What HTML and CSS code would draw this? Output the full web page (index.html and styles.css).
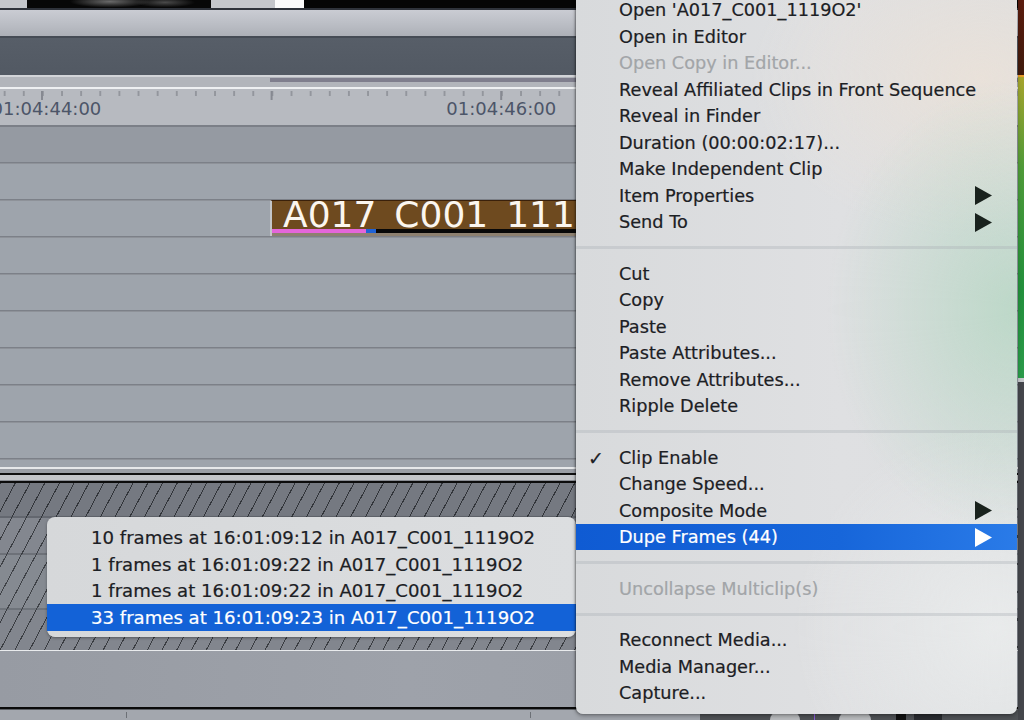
FILE: index.html
```html
<!DOCTYPE html>
<html>
<head>
<meta charset="utf-8">
<link rel="stylesheet" href="styles.css">
</head>
<body>
<div class="screen">
  <div class="timeline">
    <div class="thumbs">
      <span class="tg w27"></span><span class="tb img w184"></span><span class="tg w64"></span><span class="tw w29"></span><span class="tb fill"></span>
    </div>
    <div class="r-dark"></div>
    <div class="toolbar"></div>
    <div class="r-mid"></div>
    <div class="slate"></div>
    <div class="r-light"></div>
    <div class="scroll"><div class="scroll-bar"></div></div>
    <div class="r-white"></div>
    <div class="ruler">
      <span class="tc first">01:04:44:00</span>
      <span class="tc second">01:04:46:00</span>
    </div>
    <div class="r-ruler"></div>
    <div class="track t1"></div>
    <div class="track"></div>
    <div class="track clip-track">
      <div class="clip">
        <div class="clip-name">A017_C001_111</div>
        <div class="clip-strip"><span class="s-mag"></span><span class="s-blue"></span><span class="s-black"></span></div>
        <div class="clip-foot"></div>
      </div>
    </div>
    <div class="track"></div>
    <div class="track"></div>
    <div class="track"></div>
    <div class="track"></div>
    <div class="track"></div>
    <div class="track"></div>
    <div class="track-part"></div>
    <div class="div-a"></div>
    <div class="div-b"></div>
    <div class="div-c"></div>
    <div class="div-d"></div>
    <div class="div-e"></div>
    <div class="div-f"></div>
    <div class="hatch">
      <div class="h-row h1"></div>
      <div class="h-row h2"></div>
      <div class="h-row h3"></div>
      <div class="h-row h4"></div>
    </div>
    <div class="div-g"></div>
    <div class="band"></div>
    <div class="div-h"></div>
    <div class="bottom">
      <div class="bottom-left"></div>
      <div class="bottom-right">
        <span class="knob"></span><span class="purple"></span><span class="knob k2"></span><span class="cursor"></span><span class="dark-btn"></span>
      </div>
    </div>
  </div>
  <div class="meter">
    <div class="m-red"></div>
    <div class="m-orange"></div>
    <div class="m-green"></div>
    <div class="m-light"></div>
    <div class="m-dark"></div>
  </div>

  <div class="submenu">
    <div class="si">10 frames at 16:01:09:12 in A017_C001_1119O2</div>
    <div class="si">1 frames at 16:01:09:22 in A017_C001_1119O2</div>
    <div class="si">1 frames at 16:01:09:22 in A017_C001_1119O2</div>
    <div class="si sel">33 frames at 16:01:09:23 in A017_C001_1119O2</div>
  </div>

  <div class="menu">
    <div class="mi"><span class="ck"></span><span class="lb">Open 'A017_C001_1119O2'</span></div>
    <div class="mi"><span class="ck"></span><span class="lb">Open in Editor</span></div>
    <div class="mi dis"><span class="ck"></span><span class="lb">Open Copy in Editor...</span></div>
    <div class="mi"><span class="ck"></span><span class="lb">Reveal Affiliated Clips in Front Sequence</span></div>
    <div class="mi"><span class="ck"></span><span class="lb">Reveal in Finder</span></div>
    <div class="mi"><span class="ck"></span><span class="lb">Duration (00:00:02:17)...</span></div>
    <div class="mi"><span class="ck"></span><span class="lb">Make Independent Clip</span></div>
    <div class="mi"><span class="ck"></span><span class="lb">Item Properties</span><svg class="ar" viewBox="0 0 17 19"><polygon points="0,0 17,9.5 0,19"/></svg></div>
    <div class="mi"><span class="ck"></span><span class="lb">Send To</span><svg class="ar" viewBox="0 0 17 19"><polygon points="0,0 17,9.5 0,19"/></svg></div>
    <div class="sep"></div>
    <div class="mi"><span class="ck"></span><span class="lb">Cut</span></div>
    <div class="mi"><span class="ck"></span><span class="lb">Copy</span></div>
    <div class="mi"><span class="ck"></span><span class="lb">Paste</span></div>
    <div class="mi"><span class="ck"></span><span class="lb">Paste Attributes...</span></div>
    <div class="mi"><span class="ck"></span><span class="lb">Remove Attributes...</span></div>
    <div class="mi"><span class="ck"></span><span class="lb">Ripple Delete</span></div>
    <div class="sep"></div>
    <div class="mi"><span class="ck">✓</span><span class="lb">Clip Enable</span></div>
    <div class="mi"><span class="ck"></span><span class="lb">Change Speed...</span></div>
    <div class="mi"><span class="ck"></span><span class="lb">Composite Mode</span><svg class="ar" viewBox="0 0 17 19"><polygon points="0,0 17,9.5 0,19"/></svg></div>
    <div class="mi sel"><span class="ck"></span><span class="lb">Dupe Frames (44)</span><svg class="ar" viewBox="0 0 17 19"><polygon points="0,0 17,9.5 0,19"/></svg></div>
    <div class="sep"></div>
    <div class="mi dis"><span class="ck"></span><span class="lb">Uncollapse Multiclip(s)</span></div>
    <div class="sep"></div>
    <div class="mi"><span class="ck"></span><span class="lb">Reconnect Media...</span></div>
    <div class="mi"><span class="ck"></span><span class="lb">Media Manager...</span></div>
    <div class="mi"><span class="ck"></span><span class="lb">Capture...</span></div>
  </div>
</div>
</body>
</html>
```

FILE: styles.css
```css
* { box-sizing: border-box; }
html, body { margin: 0; padding: 0; }
body { width: 1024px; height: 720px; overflow: hidden; background: #9a9ea6; font-family: "DejaVu Sans", "Liberation Sans", sans-serif; }

.screen { position: relative; width: 1024px; height: 720px; display: flex; overflow: hidden; }
.timeline { flex: 1; display: flex; flex-direction: column; min-width: 0; }

/* top thumbnail strip */
.thumbs { height: 8px; display: flex; }
.thumbs span { display: block; height: 100%; }
.tg { background: #c4c6cb; }
.tb { background: #050505; }
.tb.img { background: radial-gradient(ellipse 40px 6px at 45% 20%, #6a6a6a, transparent), radial-gradient(ellipse 30px 5px at 75% 30%, #4a4a4a, transparent), #070707; }
.tw { background: #fbfbfb; }
.w27 { width: 27px; } .w184 { width: 184px; } .w64 { width: 64px; } .w29 { width: 29px; }
.fill { flex: 1; }

.r-dark { height: 2px; background: #2e323a; }
.toolbar { height: 26px; background: linear-gradient(#caccd3, #b9bcc3 60%, #adb0b7); }
.r-mid { height: 2px; background: #464c55; }
.slate { height: 37px; background: linear-gradient(#575e68, #525963); }
.r-light { height: 2px; background: #d2d4d8; }
.scroll { height: 10px; background: #b2b5bb; padding: 1px 0 0 270px; }
.scroll-bar { height: 4px; background: #7f7e8d; }
.r-white { height: 2px; background: #eef0f2; }

.ruler {
  height: 36px; display: flex; padding-top: 10px;
  background:
    linear-gradient(90deg, #868991 0 2px, transparent 2px) 41px 2px / 229.6px 9px repeat-x,
    linear-gradient(90deg, #93969d 0 2px, transparent 2px) 3.7px 2px / 19.13px 5px repeat-x,
    #b7bac0;
}
.tc { font-size: 18px; line-height: 20px; color: #4c5568; white-space: nowrap; }
.tc.first { margin-left: -8.5px; }
.tc.second { margin-left: 345px; }
.r-ruler { height: 2px; background: #7b7f87; }

.track { height: 37px; flex: none; background: linear-gradient(#9ea4ac 0 35px, #7c8088 35px 36px, #8e9299 36px); }
.track.t1 { background: linear-gradient(#959aa2 0 35px, #7c8088 35px 36px, #8e9299 36px); }
.clip-track { display: flex; padding-left: 270px; }
.clip { width: 310px; height: 36px; margin-top: -1px; border-left: 2px solid #c4c6c9; background: #6e4a1f; border-top: 1px solid #3a200a; display: flex; flex-direction: column; overflow: hidden; }
.clip-name { height: 28px; flex: none; color: #fbf6ef; font-size: 36px; line-height: 28px; padding-left: 11px; white-space: nowrap; overflow: hidden; }
.clip-strip { height: 4px; flex: none; display: flex; }
.s-mag { width: 94px; background: #e466da; }
.s-blue { width: 10px; background: #1f62d6; }
.s-black { flex: 1; background: #080808; }
.clip-foot { height: 3px; flex: none; background: #8d8070; }

.track-part { height: 7px; background: #9ea4ac; }
.div-a { height: 2px; background: #e6e8ea; }
.div-b { height: 4px; background: #9a9ea5; }
.div-c { height: 2px; background: #101010; }
.div-d { height: 5px; background: #c3c5c9; }
.div-e { height: 1px; background: #8a8d93; }
.div-f { height: 2px; background: #0c0c0c; }

.hatch {
  height: 167px; display: flex; flex-direction: column;
  background: repeating-linear-gradient(118deg, #34373c 0 1px, transparent 1px 13px), #7e838b;
}
.h-row { border-bottom: 2px solid rgba(60,63,70,.3); }
.h1 { height: 35px; background: rgba(40,44,50,.1); }
.h2 { height: 37px; background: rgba(255,255,255,.04); }
.h3 { height: 55px; background: rgba(255,255,255,.06); }
.h4 { flex: 1; border-bottom: none; background: rgba(255,255,255,.03); }

.div-g { height: 1px; background: #e9ebed; }
.band { height: 56px; background: linear-gradient(90deg, #979ba3, #9ea2aa 40%, #979ba3); }
.div-h { height: 3px; background: linear-gradient(#0a0a0a 0 2px, #5c5f64 2px); }
.bottom { height: 10px; display: flex; }
.bottom-left {
  width: 700px; flex: none;
  background:
    linear-gradient(90deg, #6c7076 0 1px, transparent 1px) 126px 2px / 1px 6px no-repeat,
    linear-gradient(90deg, #6c7076 0 1px, transparent 1px) 530px 2px / 1px 6px no-repeat,
    #a3a7ae;
}
.bottom-right { flex: 1; background: #4f5256; display: flex; align-items: flex-end; padding-left: 70px; }
.knob { width: 30px; height: 8px; border-radius: 15px 15px 0 0; background: #b9bbbe; }
.purple { width: 1px; height: 8px; background: #8a5ad8; margin-left: 14px; }
.k2 { margin-left: 24px; width: 32px; }
.cursor { width: 10px; height: 6px; background: #111; margin-left: 25px; }
.dark-btn { width: 28px; height: 6px; background: #2a2c30; margin-left: 8px; }

/* right meter */
.meter { width: 6px; flex: none; display: flex; flex-direction: column; }
.m-red { height: 75px; background: linear-gradient(#5c1c0e, #3f1a0c); }
.m-orange { height: 2px; background: #e89a28; }
.m-green { height: 301px; background: linear-gradient(#a6a42c, #4f9a38 30%, #23903c 70%, #2b9a4a); }
.m-light { height: 4px; background: #c4c6ca; }
.m-dark { flex: 1; background: #44464b; }

/* main context menu */
.menu {
  position: absolute; left: 576px; top: -8.25px; width: 441px;
  padding: 5px 0 7.75px;
  border-radius: 0 0 7px 7px;
  background:
    radial-gradient(ellipse 190px 230px at 100% 44%, rgba(178,214,192,.75), rgba(178,214,192,0)),
    radial-gradient(ellipse 230px 160px at 92% 12%, rgba(236,226,216,.8), rgba(236,226,216,0)),
    radial-gradient(ellipse 200px 200px at 95% 88%, rgba(236,238,238,.8), rgba(236,238,238,0)),
    linear-gradient(90deg, #d8dadc, #dfe0e2 60%, #dcdee0);
  box-shadow: -1px 0 2px rgba(0,0,0,.35), 0 2px 4px rgba(0,0,0,.3);
  color: #1c2024;
  font-size: 17.7px;
  -webkit-text-stroke: 0.2px currentColor;
}
.mi { height: 26.5px; display: flex; align-items: center; padding: 0 25px 0 12px; white-space: nowrap; line-height: 20px; }
.ck { width: 31px; flex: none; font-size: 19px; line-height: 20px; }
.lb { flex: 1; line-height: 20px; }
.ar { width: 17px; height: 19px; flex: none; fill: #19221d; }
.mi.dis { color: #a2a5a8; }
.mi.sel { background: linear-gradient(90deg, #0f5bd3, #1766da 60%, #2a7be8); color: #fff; }
.mi.sel .ar { fill: #fff; }
.sep { height: 25px; display: flex; align-items: center; }
.sep::before { content: ""; display: block; width: 100%; height: 3px; background: rgba(170,175,180,.35); }

/* dupe frames submenu */
.submenu {
  position: absolute; left: 47px; top: 517px; width: 529px;
  padding: 7.75px 0 6px;
  border-radius: 8px;
  background: linear-gradient(90deg, #d6d8da, #dcdee0);
  box-shadow: 0 1px 3px rgba(0,0,0,.35);
  color: #1c2024;
  font-size: 18.1px;
  line-height: 20px;
  -webkit-text-stroke: 0.2px currentColor;
}
.si { height: 26.5px; display: flex; align-items: center; padding-left: 44px; white-space: nowrap; }
.si.sel { background: #1362d7; color: #fff; }
```
